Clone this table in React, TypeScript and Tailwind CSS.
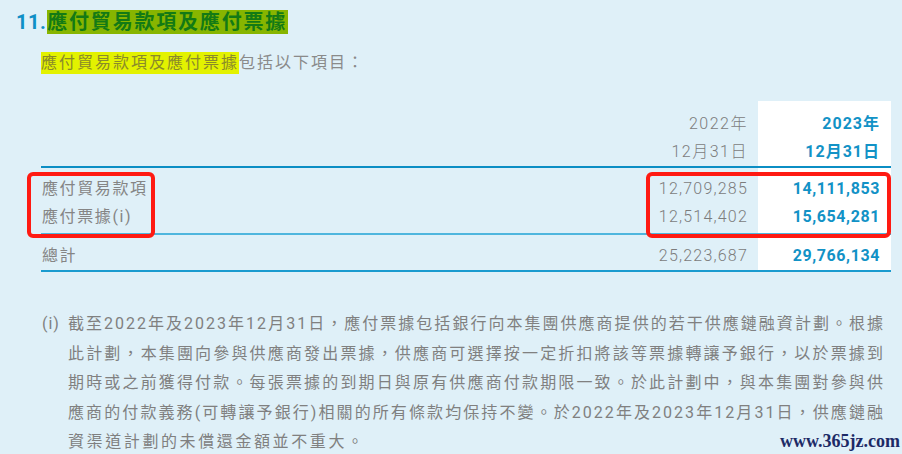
import React from "react";

const FONT = "font-['Roboto','Noto_Sans_CJK_TC',sans-serif]";

function Row({
  label,
  a,
  b,
  h = "h-[28px]",
}: {
  label: string;
  a: string;
  b: string;
  h?: string;
}) {
  return (
    <div className={`flex ${h} items-center`}>
      <div className="flex-1 pl-[1px] text-[16px] tracking-[1.6px] text-[#858585]">{label}</div>
      <div className="w-[120px] pr-[10px] text-right text-[16px] font-light tracking-[1.2px] text-[#7c7c7c]">{a}</div>
      <div className="w-[133px] bg-white pr-[11px] text-right text-[16px] font-bold tracking-[0.6px] text-[#1292c6] h-full flex items-center justify-end">
        {b}
      </div>
    </div>
  );
}

export default function App() {
  const lines = [
    "截至2022年及2023年12月31日，應付票據包括銀行向本集團供應商提供的若干供應鏈融資計劃。根據",
    "此計劃，本集團向參與供應商發出票據，供應商可選擇按一定折扣將該等票據轉讓予銀行，以於票據到",
    "期時或之前獲得付款。每張票據的到期日與原有供應商付款期限一致。於此計劃中，與本集團對參與供",
    "應商的付款義務(可轉讓予銀行)相關的所有條款均保持不變。於2022年及2023年12月31日，供應鏈融",
  ];
  return (
    <div className={`relative h-[454px] w-[902px] overflow-hidden bg-[#dff0f8] ${FONT}`}>
      {/* Title */}
      <div className="flex items-center pl-[16px] pt-[10px]">
        <span className="mr-[1px] text-[20px] font-bold leading-[24px] tracking-[0.5px] text-[#0f8fc6]">11.</span>
        <span className="bg-[#87b500] pr-[1px] text-[20px] font-bold leading-[24px] tracking-[1.8px] text-[#137a15]">
          應付貿易款項及應付票據
        </span>
      </div>
      {/* Subtitle */}
      <div className="mt-[18px] flex pl-[41px] text-[16px] leading-[22px] tracking-[2px] text-[#8a8a8a]">
        <span className="bg-[#e3f200] text-[#8a8a2a]">應付貿易款項及應付票據</span>
        <span>包括以下項目：</span>
      </div>

      {/* Table */}
      <div className="ml-[41px] mt-[27px] w-[850px]">
        <div className="flex">
          <div className="flex-1" />
          <div className="w-[120px] pr-[10px] pt-[9px] text-right text-[16px] font-light tracking-[1.5px] text-[#7c7c7c]">
            <div className="flex h-[28px] items-center justify-end">2022年</div>
            <div className="flex h-[28px] items-center justify-end">12月31日</div>
          </div>
          <div className="w-[133px] bg-white pr-[11px] pt-[9px] text-right text-[16px] font-bold tracking-[1px] text-[#1292c6]">
            <div className="flex h-[28px] items-center justify-end">2023年</div>
            <div className="flex h-[28px] items-center justify-end">12月31日</div>
          </div>
        </div>
        <div className="h-[2px] bg-[#0b8ec4]" />
        <div className="flex h-[7px]">
          <div className="flex-1" />
          <div className="w-[133px] bg-white" />
        </div>
        <Row label="應付貿易款項" a="12,709,285" b="14,111,853" />
        <Row label="應付票據(i)" a="12,514,402" b="15,654,281" />
        <div className="flex h-[2px]">
          <div className="flex-1" />
          <div className="w-[133px] bg-white" />
        </div>
        <div className="h-[2px] bg-[#4fb6de]" />
        <div className="flex h-[7px]">
          <div className="flex-1" />
          <div className="w-[133px] bg-white" />
        </div>
        <Row label="總計" a="25,223,687" b="29,766,134" />
        <div className="h-[2px] bg-[#1a9bcf]" />
      </div>

      {/* Footnote */}
      <div className="ml-[42px] mt-[37px] flex text-[16px] leading-[29.5px] text-[#808080]">
        <div className="w-[26px] shrink-0 tracking-[1px]">(i)</div>
        <div className="w-[817px]">
          {lines.map((l, i) => (
            <div key={i} className="text-justify [text-align-last:justify] tracking-[2px]">
              {l}
            </div>
          ))}
          <div className="tracking-[2.6px]">資渠道計劃的未償還金額並不重大。</div>
        </div>
      </div>

      {/* Red highlight boxes */}
      <div className="absolute left-[27px] top-[172px] h-[66px] w-[128px] rounded-[6px] border-[4px] border-[#ff1a12]" />
      <div className="absolute left-[646px] top-[172px] h-[66px] w-[245px] rounded-[6px] border-[4px] border-[#ff1a12]" />

      {/* Watermark */}
      <div className="absolute left-[780px] top-[428px] font-['Liberation_Serif',serif] text-[18px] font-bold tracking-[0px] text-[#1c2a66]">
        www.365jz.com
      </div>
    </div>
  );
}
